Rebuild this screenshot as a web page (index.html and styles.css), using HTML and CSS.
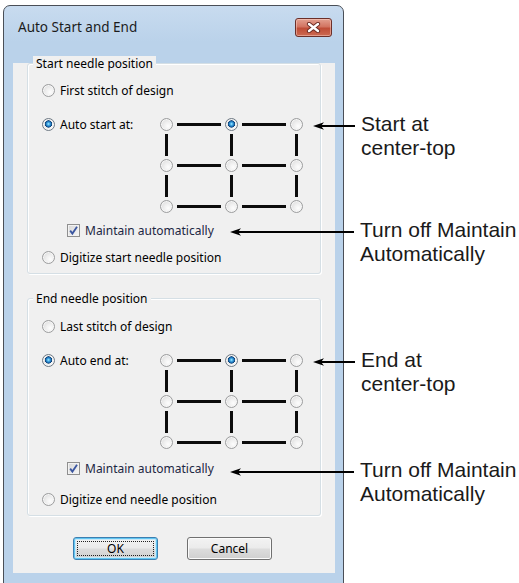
FILE: index.html
```html
<!DOCTYPE html>
<html>

<head>
  <title>Auto Start and End</title>
  <link rel="stylesheet" href="styles.css">
</head>

<body>
  <div class="page">
    <div class="window">
      <div class="titlebar">
        <span class="title">Auto Start and End</span>
        <button class="close" type="button">
          <svg width="15" height="11" viewBox="0 0 15 11">
            <path d="M3 2 L12 9 M12 2 L3 9" stroke="#6a2a22" stroke-width="4.2" stroke-linecap="round"/>
            <path d="M3 2 L12 9 M12 2 L3 9" stroke="#fff" stroke-width="2.4" stroke-linecap="round"/>
          </svg>
        </button>
      </div>

      <div class="client">
        <div class="group">
          <span class="group-title">Start needle position</span>
          <div class="row row-first"><span class="radio"></span><span>First stitch of design</span></div>
          <div class="row row-auto">
            <span class="option"><span class="radio checked"></span><span>Auto start at:</span></span>
            <div class="pos-grid">
              <span class="radio"></span><span class="hline"></span><span class="radio checked"></span><span class="hline"></span><span class="radio"></span>
              <span class="vline"></span><span></span><span class="vline"></span><span></span><span class="vline"></span>
              <span class="radio"></span><span class="hline"></span><span class="radio"></span><span class="hline"></span><span class="radio"></span>
              <span class="vline"></span><span></span><span class="vline"></span><span></span><span class="vline"></span>
              <span class="radio"></span><span class="hline"></span><span class="radio"></span><span class="hline"></span><span class="radio"></span>
            </div>
          </div>
          <div class="row row-check">
            <span class="check">
              <svg width="11" height="11" viewBox="0 0 11 11"><path d="M2.2 5.6 L4.4 8.6 L9 1.8" fill="none" stroke="#3b56a0" stroke-width="1.8"/></svg>
            </span>
            <span class="check-label">Maintain automatically</span>
          </div>
          <div class="row row-digitize"><span class="radio"></span><span>Digitize start needle position</span></div>
        </div>

        <div class="group group-end">
          <span class="group-title">End needle position</span>
          <div class="row row-first"><span class="radio"></span><span>Last stitch of design</span></div>
          <div class="row row-auto">
            <span class="option"><span class="radio checked"></span><span>Auto end at:</span></span>
            <div class="pos-grid">
              <span class="radio"></span><span class="hline"></span><span class="radio checked"></span><span class="hline"></span><span class="radio"></span>
              <span class="vline"></span><span></span><span class="vline"></span><span></span><span class="vline"></span>
              <span class="radio"></span><span class="hline"></span><span class="radio"></span><span class="hline"></span><span class="radio"></span>
              <span class="vline"></span><span></span><span class="vline"></span><span></span><span class="vline"></span>
              <span class="radio"></span><span class="hline"></span><span class="radio"></span><span class="hline"></span><span class="radio"></span>
            </div>
          </div>
          <div class="row row-check">
            <span class="check">
              <svg width="11" height="11" viewBox="0 0 11 11"><path d="M2.2 5.6 L4.4 8.6 L9 1.8" fill="none" stroke="#3b56a0" stroke-width="1.8"/></svg>
            </span>
            <span class="check-label">Maintain automatically</span>
          </div>
          <div class="row row-digitize"><span class="radio"></span><span>Digitize end needle position</span></div>
        </div>

        <div class="buttons">
          <button class="btn btn-default" type="button"><span>OK</span></button>
          <button class="btn" type="button">Cancel</button>
        </div>
      </div>
    </div>

    <!-- callouts drawn over the dialog -->
    <div class="callout callout-start">
      <svg class="arrow" width="42" height="24" viewBox="0 0 42 24">
        <path d="M0 14 L11 10.2 L8 14 L11 17.8 Z" fill="#000"/>
        <line x1="7" y1="14" x2="42" y2="14" stroke="#000" stroke-width="2"/>
      </svg>
      <p>Start at<br>center-top</p>
    </div>
    <div class="callout callout-keep1">
      <svg class="arrow" width="124" height="24" viewBox="0 0 124 24">
        <path d="M0 14 L11 10.2 L8 14 L11 17.8 Z" fill="#000"/>
        <line x1="7" y1="14" x2="124" y2="14" stroke="#000" stroke-width="2"/>
      </svg>
      <p>Turn off Maintain<br>Automatically</p>
    </div>
    <div class="callout callout-end">
      <svg class="arrow" width="42" height="24" viewBox="0 0 42 24">
        <path d="M0 14 L11 10.2 L8 14 L11 17.8 Z" fill="#000"/>
        <line x1="7" y1="14" x2="42" y2="14" stroke="#000" stroke-width="2"/>
      </svg>
      <p>End at<br>center-top</p>
    </div>
    <div class="callout callout-keep2">
      <svg class="arrow" width="124" height="24" viewBox="0 0 124 24">
        <path d="M0 14 L11 10.2 L8 14 L11 17.8 Z" fill="#000"/>
        <line x1="7" y1="14" x2="124" y2="14" stroke="#000" stroke-width="2"/>
      </svg>
      <p>Turn off Maintain<br>Automatically</p>
    </div>
  </div>
</body>

</html>
```

FILE: styles.css
```css
body {
  margin: 0;
  background: #fff;
  font-family: "Noto Sans", "Open Sans", sans-serif;
  font-size: 12px;
  color: #000;
}

.page {
  position: relative;
  width: 519px;
  height: 583px;
  overflow: hidden;
  padding: 5px 0 0 3px;
  box-sizing: border-box;
}

.window {
  width: 341px;
  box-sizing: border-box;
  border: 1px solid #4a4f57;
  border-radius: 7px 7px 0 0;
  padding: 0 8px 10px 9px;
  background: linear-gradient(#c8dbef, #bad2ea 36px, #bad2ea);
}

.titlebar {
  height: 35px;
  box-sizing: border-box;
  padding: 7px 3px 0 5px;
  display: flex;
  align-items: center;
  justify-content: space-between;
}

.title {
  font-size: 13.5px;
  color: #1b1b1b;
}

.close {
  width: 37px;
  height: 19px;
  padding: 0;
  border: 1px solid #6b2f29;
  border-radius: 3px;
  background: linear-gradient(#e3a090 0, #d27461 45%, #bf4d37 55%, #cc6a52 100%);
  box-shadow: inset 0 0 0 1px rgba(255, 220, 210, 0.45);
  display: flex;
  align-items: center;
  justify-content: center;
}

.client {
  background: #f0f0f0;
  padding: 0 0 13px;
}

.group {
  margin: 22px 14px 0;
  border: 1px solid #d5dfe5;
  border-radius: 3px;
  box-shadow: 1px 1px 0 #fff, inset 1px 1px 0 #fff;
  padding-bottom: 8px;
  display: flex;
  flex-direction: column;
}

.group-end {
  margin-top: 24px;
}

.group-title {
  align-self: flex-start;
  margin: -8px 0 0 5px;
  padding: 0 3px;
  line-height: 16px;
  background: #f0f0f0;
}

.row {
  display: flex;
  align-items: center;
  gap: 5px;
  height: 16px;
  padding-left: 14px;
}

.row-first {
  margin-top: 10px;
}

.row-auto {
  margin-top: 18px;
  height: auto;
  align-items: flex-start;
  gap: 0;
}

.row-check {
  margin-top: 9px;
  padding-left: 39px;
}

.row-digitize {
  margin-top: 11px;
}

.group-end .row-first {
  margin-top: 11px;
}

.group-end .row-check {
  margin-top: 11px;
}

.group-end .row-digitize {
  margin-top: 15px;
}

.option {
  width: 118px;
  height: 16px;
  display: flex;
  align-items: center;
  gap: 5px;
}

.radio {
  width: 13px;
  height: 13px;
  box-sizing: border-box;
  flex: none;
  border-radius: 50%;
  border: 1px solid #9c9d9e;
  background: radial-gradient(circle at 65% 65%, #fdfdfd 0, #efefef 40%, #d4d4d4 100%);
  box-shadow: inset 0 0 0 1px #f6f6f6;
}

.radio.checked {
  border-color: #6f7a85;
  background:
    radial-gradient(circle at 50% 45%, #b5ecff 0, #4bb3ea 1.2px, #1d6fb4 2.6px, #0e3f72 3.4px, rgba(14, 63, 114, 0) 3.9px),
    radial-gradient(circle at 65% 65%, #fbfbfb 0, #ececec 40%, #cfcfcf 100%);
}

.pos-grid {
  margin-top: 2px;
  display: grid;
  grid-template-columns: 13px 52px 13px 52px 13px;
  grid-template-rows: 13px 28px 13px 28px 13px;
}

.hline {
  align-self: center;
  height: 3px;
  margin: 0 4px;
  background: #0c0c0c;
}

.vline {
  justify-self: center;
  width: 3px;
  margin: 3px 0;
  background: #0c0c0c;
}

.check {
  width: 13px;
  height: 13px;
  box-sizing: border-box;
  flex: none;
  border: 1px solid #8f8f8f;
  background: linear-gradient(135deg, #d6d6d6, #f7f7f7);
  box-shadow: inset 0 0 0 1px #f2f2f2;
  display: flex;
  align-items: center;
  justify-content: center;
}

.check-label {
  color: #1c2743;
}

.buttons {
  margin-top: 21px;
  padding-left: 60px;
  display: flex;
  gap: 29px;
}

.btn {
  width: 85px;
  height: 23px;
  padding: 0;
  border: 1px solid #707070;
  border-radius: 3px;
  background: linear-gradient(#f3f3f3 0, #ebebeb 48%, #dddddd 52%, #cfcfcf 100%);
  box-shadow: inset 0 0 0 1px #fbfbfb;
  font-family: "Noto Sans", "Open Sans", sans-serif;
  font-size: 12px;
  color: #000;
}

.btn-default {
  border-color: #3c7fb1;
  box-shadow: inset 0 0 0 1px #62c6f2, inset 0 0 0 2px #c8e9f8;
  outline: 1px dotted #222;
  outline-offset: -5px;
}

.callout {
  position: absolute;
  display: flex;
  align-items: flex-start;
  gap: 6px;
}

.callout p {
  margin: 0;
  font-family: "Liberation Sans", Arial, sans-serif;
  font-size: 21px;
  line-height: 24px;
  color: #1a1a1a;
}

.arrow {
  flex: none;
}

.callout-start {
  left: 313px;
  top: 112px;
}

.callout-keep1 {
  left: 230px;
  top: 218px;
}

.callout-end {
  left: 313px;
  top: 348px;
}

.callout-keep2 {
  left: 230px;
  top: 458px;
}
```
